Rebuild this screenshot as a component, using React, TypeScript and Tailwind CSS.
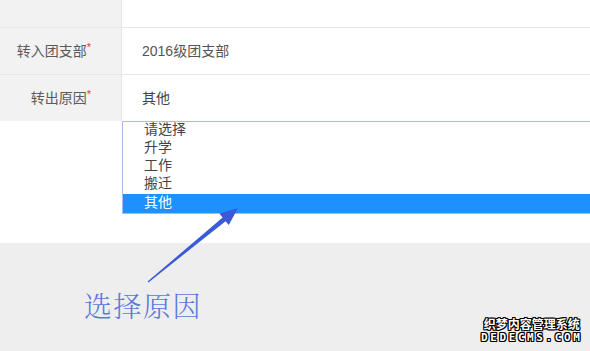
import React from 'react';

const reasons = ['请选择', '升学', '工作', '搬迁', '其他'];

const FormRow = ({ label, value, height }: { label: string; value: string; height: string }) => (
  <div className={`flex border-b border-[#e6e6e6] ${height}`}>
    <div className="w-[122px] shrink-0 bg-[#f2f2f2] border-r border-[#e6e6e6] flex items-center justify-end pr-[30px] text-[14px] text-[#5a5a5a]">
      {label && (
        <span>
          {label}
          <span className="text-[#e4393c] text-[11px] align-top relative top-[-2px]">*</span>
        </span>
      )}
    </div>
    <div className="flex-1 flex items-center pl-[20px] text-[14px] text-[#555]">{value}</div>
  </div>
);

const Arrow = () => (
  <svg className="absolute left-0 top-0" width="590" height="351" viewBox="0 0 590 351">
    <polygon
      points="147.6,281.6 222.6,217.4 219.4,213.6 238,208 228.8,225 225.6,221.2 148.4,282.4"
      fill="#3a5ad8"
    />
  </svg>
);

export default function App() {
  return (
    <div
      className="relative w-[590px] h-[351px] overflow-hidden bg-white"
      style={{ fontFamily: '"Liberation Sans", "Noto Sans CJK SC", sans-serif' }}
    >
      <FormRow label="" value="" height="h-[28px]" />
      <FormRow label="转入团支部" value="2016级团支部" height="h-[47px]" />
      <div className="flex h-[46px]">
        <div className="w-[122px] shrink-0 bg-[#f2f2f2] border-r border-[#e6e6e6] flex items-center justify-end pr-[30px] text-[14px] text-[#5a5a5a]">
          <span>
            转出原因
            <span className="text-[#e4393c] text-[11px] align-top relative top-[-2px]">*</span>
          </span>
        </div>
        <div className="flex-1 flex items-center pl-[20px] text-[14px] text-[#444]">其他</div>
      </div>

      <div className="ml-[122px] w-[480px] border border-[#a8bde6] text-[14px] text-[#444]">
        {reasons.map((r, i) => (
          <div
            key={r}
            className={`h-[18px] pl-[21px] flex items-center leading-none ${
              i === reasons.length - 1 ? 'bg-[#1e90ff] text-white h-[19px] pb-[3px]' : 'pb-[4px]'
            }`}
          >
            {r}
          </div>
        ))}
      </div>

      <div className="h-[29px]" />
      <div className="h-[109px] bg-[#eeeeee] relative">
        <div
          className="absolute left-[84px] top-[48px] text-[28px] leading-none text-[#5b78dc] font-light tracking-[1.5px]"
          style={{ fontFamily: '"Noto Serif CJK SC", "Noto Sans CJK SC", serif' }}
        >
          选择原因
        </div>
        <div className="absolute left-[481px] top-[75px] flex flex-col items-center text-white font-bold leading-none [text-shadow:1px_0_#000,-1px_0_#000,0_1px_#000,0_-1px_#000,1px_1px_#000,-1px_-1px_#000,1px_-1px_#000,-1px_1px_#000]">
          <span className="text-[12px]" style={{ fontFamily: '"Noto Sans CJK SC", sans-serif' }}>织梦内容管理系统</span>
          <span className="text-[11px] tracking-[2.6px] mt-[2px]" style={{ fontFamily: '"DejaVu Sans Mono", monospace' }}>DEDECMS.COM</span>
        </div>
      </div>

      <Arrow />
    </div>
  );
}
